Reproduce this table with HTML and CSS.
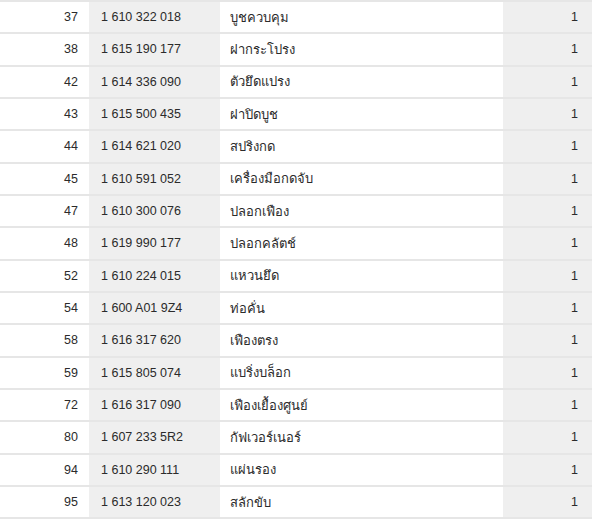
FILE: index.html
```html
<!DOCTYPE html>
<html lang="th">
<head>
<meta charset="utf-8">
<link rel="stylesheet" href="styles.css">
</head>
<body>
<div class="table">
  <div class="row"><div class="c pos">37</div><div class="c num">1 610 322 018</div><div class="c name">บูชควบคุม</div><div class="c qty">1</div></div>
  <div class="row"><div class="c pos">38</div><div class="c num">1 615 190 177</div><div class="c name">ฝากระโปรง</div><div class="c qty">1</div></div>
  <div class="row"><div class="c pos">42</div><div class="c num">1 614 336 090</div><div class="c name">ตัวยึดแปรง</div><div class="c qty">1</div></div>
  <div class="row"><div class="c pos">43</div><div class="c num">1 615 500 435</div><div class="c name">ฝาปิดบูช</div><div class="c qty">1</div></div>
  <div class="row"><div class="c pos">44</div><div class="c num">1 614 621 020</div><div class="c name">สปริงกด</div><div class="c qty">1</div></div>
  <div class="row"><div class="c pos">45</div><div class="c num">1 610 591 052</div><div class="c name">เครื่องมือกดจับ</div><div class="c qty">1</div></div>
  <div class="row"><div class="c pos">47</div><div class="c num">1 610 300 076</div><div class="c name">ปลอกเฟือง</div><div class="c qty">1</div></div>
  <div class="row"><div class="c pos">48</div><div class="c num">1 619 990 177</div><div class="c name">ปลอกคลัตช์</div><div class="c qty">1</div></div>
  <div class="row"><div class="c pos">52</div><div class="c num">1 610 224 015</div><div class="c name">แหวนยึด</div><div class="c qty">1</div></div>
  <div class="row"><div class="c pos">54</div><div class="c num">1 600 A01 9Z4</div><div class="c name">ท่อคั่น</div><div class="c qty">1</div></div>
  <div class="row"><div class="c pos">58</div><div class="c num">1 616 317 620</div><div class="c name">เฟืองตรง</div><div class="c qty">1</div></div>
  <div class="row"><div class="c pos">59</div><div class="c num">1 615 805 074</div><div class="c name">แบริ่งบล็อก</div><div class="c qty">1</div></div>
  <div class="row"><div class="c pos">72</div><div class="c num">1 616 317 090</div><div class="c name">เฟืองเยื้องศูนย์</div><div class="c qty">1</div></div>
  <div class="row"><div class="c pos">80</div><div class="c num">1 607 233 5R2</div><div class="c name">กัฟเวอร์เนอร์</div><div class="c qty">1</div></div>
  <div class="row"><div class="c pos">94</div><div class="c num">1 610 290 111</div><div class="c name">แผ่นรอง</div><div class="c qty">1</div></div>
  <div class="row"><div class="c pos">95</div><div class="c num">1 613 120 023</div><div class="c name">สลักขับ</div><div class="c qty">1</div></div>
</div>
</body>
</html>
```
FILE: styles.css
```css
html, body {
  margin: 0;
  padding: 0;
  background: #ffffff;
}
body {
  font-family: "Liberation Sans", Arial, sans-serif;
  font-size: 13px;
  color: #2b2b2b;
}
.table {
  display: flex;
  flex-direction: column;
  gap: 2px;
  padding: 2px 0;
  background: #e6e6e6;
  width: 592px;
}
.row {
  display: grid;
  grid-template-columns: 89px 131px 283px 89px;
  height: 30.33px;
}
.c {
  display: flex;
  align-items: center;
  white-space: nowrap;
}
.pos {
  background: #ffffff;
  justify-content: flex-end;
  padding-right: 11px;
  font-size: 12.5px;
}
.num {
  background: #efefef;
  padding-left: 12px;
  font-size: 12.5px;
}
.name {
  background: #ffffff;
  padding-left: 10px;
}
.qty {
  background: #efefef;
  justify-content: flex-end;
  padding-right: 14px;
  font-size: 12.5px;
}
```
